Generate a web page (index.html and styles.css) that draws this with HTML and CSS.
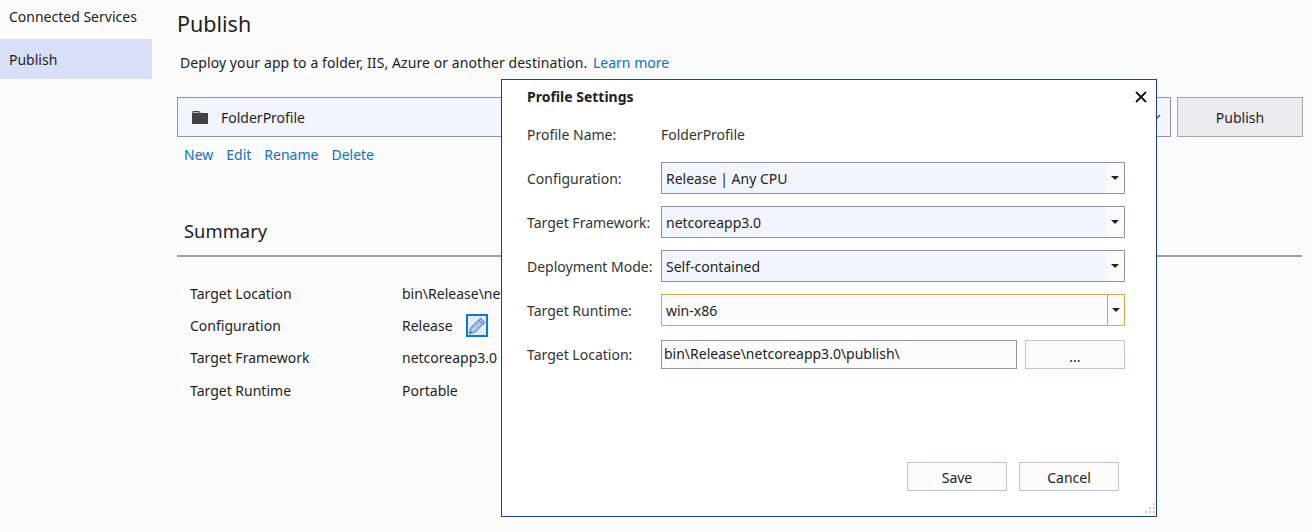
FILE: index.html
```html
<!DOCTYPE html>
<html lang="en">
<head>
  <meta charset="UTF-8">
  <title>Publish</title>
  <link rel="stylesheet" href="styles.css">
</head>
<body>
  <div class="page">
    <nav class="sidebar">
      <div class="nav-item">Connected Services</div>
      <div class="nav-item active">Publish</div>
    </nav>

    <main class="content">
      <h1>Publish</h1>
      <p class="intro"><span class="intro-text">Deploy your app to a folder, IIS, Azure or another destination.</span> <a class="learn" href="#">Learn more</a></p>

      <div class="profile-row">
        <div class="profile-select">
          <svg class="folder" width="18" height="15" viewBox="0 0 18 15">
            <path d="M1 2.5 Q1 1 2.5 1 H8 L10 3 H17 V14 H1 Z" fill="#424242"/>
            <path d="M1.5 2.5 H8 L9 3.5" fill="none" stroke="#bbb" stroke-width="1"/>
          </svg>
          <span>FolderProfile</span>
          <svg class="chevron" width="9" height="6" viewBox="0 0 9 6">
            <path d="M1 1 L4.5 4.5 L8 1" fill="none" stroke="#333" stroke-width="1.2"/>
          </svg>
        </div>
        <button class="publish-btn">Publish</button>
      </div>

      <div class="actions">
        <a href="#">New</a>
        <a href="#">Edit</a>
        <a href="#">Rename</a>
        <a href="#">Delete</a>
      </div>

      <h2>Summary</h2>

      <div class="summary">
        <span>Target Location</span><span>bin\Release\netcoreapp3.0\publish\</span>
        <span>Configuration</span>
        <span class="with-edit">Release
          <button class="edit-btn">
            <svg width="20" height="20" viewBox="0 0 20 20">
              <path d="M14 1.5 L18.5 6 L7.5 17 L1.5 18.5 L3 12.5 Z" fill="#a5cdf6" stroke="#6b86ad" stroke-width="1.3" stroke-linejoin="round"/>
              <path d="M12 3.5 L16.5 8" stroke="#6b86ad" stroke-width="1.2"/>
              <path d="M1.5 18.5 L2.4 14.6 L5.4 17.6 Z" fill="#5f7aa3"/>
            </svg>
          </button>
        </span>
        <span>Target Framework</span><span>netcoreapp3.0</span>
        <span>Target Runtime</span><span>Portable</span>
      </div>
    </main>
  </div>

  <div class="dialog">
    <button class="close" aria-label="Close">
      <svg width="12" height="12" viewBox="0 0 12 12">
        <path d="M1 1 L11 11 M11 1 L1 11" stroke="#111" stroke-width="1.8"/>
      </svg>
    </button>
    <div class="dialog-title">Profile Settings</div>

    <div class="form">
      <label class="first-row">Profile Name:</label>
      <div class="first-row">FolderProfile</div>

      <label>Configuration:</label>
      <div class="combo"><span class="combo-text">Release | Any CPU</span><span class="arrow"></span></div>

      <label>Target Framework:</label>
      <div class="combo"><span class="combo-text">netcoreapp3.0</span><span class="arrow"></span></div>

      <label>Deployment Mode:</label>
      <div class="combo"><span class="combo-text">Self-contained</span><span class="arrow"></span></div>

      <label>Target Runtime:</label>
      <div class="combo focused"><span class="combo-text">win-x86</span><span class="arrow"></span></div>

      <label>Target Location:</label>
      <div class="location">
        <div class="text-input">bin\Release\netcoreapp3.0\publish\</div>
        <button class="browse">...</button>
      </div>
    </div>

    <div class="dialog-buttons">
      <button class="dialog-btn">Save</button>
      <button class="dialog-btn">Cancel</button>
    </div>

    <svg class="grip" width="14" height="14" viewBox="0 0 14 14" fill="#c6cddc">
      <rect x="11" y="1" width="2" height="2"/>
      <rect x="7" y="5" width="2" height="2"/><rect x="11" y="5" width="2" height="2"/>
      <rect x="3" y="9" width="2" height="2"/><rect x="7" y="9" width="2" height="2"/><rect x="11" y="9" width="2" height="2"/>
    </svg>
  </div>
</body>
</html>
```

FILE: styles.css
```css
* {
  box-sizing: border-box;
}

html, body {
  height: 100%;
}

body {
  margin: 0;
  overflow: hidden;
  background: #fbfbfb;
  color: #1e1e1e;
  font-family: "Noto Sans", sans-serif;
  font-size: 14px;
}

a {
  color: #0e70c0;
  text-decoration: none;
}

button {
  font: inherit;
  color: inherit;
}

.page {
  display: flex;
}

.sidebar {
  width: 152px;
  flex: none;
}

.nav-item {
  height: 39px;
  line-height: 34px;
  padding-left: 9px;
}

.nav-item.active {
  height: 40px;
  line-height: 41px;
  background: #d9dff7;
}

.content {
  flex: 1;
  padding: 8px 9px 0 25px;
  min-width: 0;
}

h1 {
  margin: 0;
  font-size: 21.5px;
  font-weight: 400;
  line-height: 32px;
}

.intro {
  margin: 8px 0 0 3px;
  line-height: 30px;
  height: 30px;
}

.intro-text {
  letter-spacing: 0.08px;
}

.learn {
  margin-left: 2px;
}

.profile-row {
  display: flex;
  gap: 6px;
  margin-top: 19px;
}

.profile-select {
  flex: 1;
  height: 40px;
  border: 1px solid #8a94a8;
  background: #f2f5fd;
  display: flex;
  align-items: center;
  padding: 0 9px 0 13px;
}

.folder {
  margin-right: 12px;
}

.chevron {
  margin-left: auto;
}

.publish-btn {
  width: 126px;
  height: 40px;
  border: 1px solid #a6a6a6;
  background: #ebebef;
}

.actions {
  display: flex;
  gap: 13px;
  margin: 8px 0 0 7px;
  line-height: 20px;
}

h2 {
  margin: 36px 1px 0 0;
  padding: 0 0 11px 7px;
  height: 56px;
  font-size: 18.4px;
  font-weight: 400;
  line-height: 26px;
  border-bottom: 2px solid #a0a0a0;
  display: flex;
  align-items: flex-end;
}

.summary {
  display: grid;
  grid-template-columns: 212px 1fr;
  grid-auto-rows: 32.4px;
  align-items: center;
  margin: 20px 0 0 13px;
}

.with-edit {
  display: flex;
  align-items: center;
  gap: 13px;
}

.edit-btn {
  width: 22px;
  height: 23px;
  padding: 0;
  border: 2px solid #0e78d0;
  background: #e3ecf9;
  display: flex;
  align-items: center;
  justify-content: center;
}

/* dialog sits over the page */
.dialog {
  position: absolute;
  left: 501px;
  top: 79px;
  width: 656px;
  height: 438px;
  background: #fff;
  border: 1px solid #1c3f85;
  padding: 0 31px 0 25px;
}

.close {
  position: absolute;
  top: 11px;
  right: 9px;
  padding: 0;
  border: 0;
  background: none;
  width: 12px;
  height: 12px;
  display: flex;
}

.dialog-title {
  font-weight: 700;
  line-height: 20px;
  margin-top: 7px;
}

.form {
  display: grid;
  grid-template-columns: 134px 1fr;
  grid-template-rows: 25px repeat(5, 32px);
  row-gap: 12px;
  align-items: center;
  margin-top: 18px;
  color: #333;
}

.first-row {
  align-self: start;
  line-height: 20px;
}

.combo {
  height: 32px;
  border: 1px solid #8a94a8;
  display: flex;
  color: #1e1e1e;
}

.combo-text {
  flex: 1;
  background: #f2f5fd;
  padding-left: 4px;
  line-height: 31px;
}

.arrow {
  width: 17px;
  position: relative;
  background: #fbfbfb;
}

.arrow::after {
  content: "";
  position: absolute;
  left: 4px;
  top: 13px;
  border-left: 4px solid transparent;
  border-right: 4px solid transparent;
  border-top: 4px solid #222;
}

.focused {
  border-color: #d5a74e;
}

.focused .combo-text {
  background: #fbfbfb;
}

.focused .arrow {
  border-left: 1px solid #d5a74e;
}

.location {
  display: flex;
  gap: 8px;
  height: 29px;
  color: #1e1e1e;
}

.text-input {
  flex: 1;
  border: 1px solid #8a94a8;
  background: #fbfbfb;
  padding-left: 2px;
  line-height: 25px;
}

.browse {
  width: 100px;
  border: 1px solid #bcc6da;
  background: #fbfbfb;
  padding: 4px 0 0;
}

.dialog-buttons {
  position: absolute;
  right: 37px;
  bottom: 25px;
  display: flex;
  gap: 12px;
}

.dialog-btn {
  width: 100px;
  height: 29px;
  border: 1px solid #bcc6da;
  background: #fbfbfb;
  padding: 1px 0 0;
}

.grip {
  position: absolute;
  right: 0;
  bottom: 0;
}
```
